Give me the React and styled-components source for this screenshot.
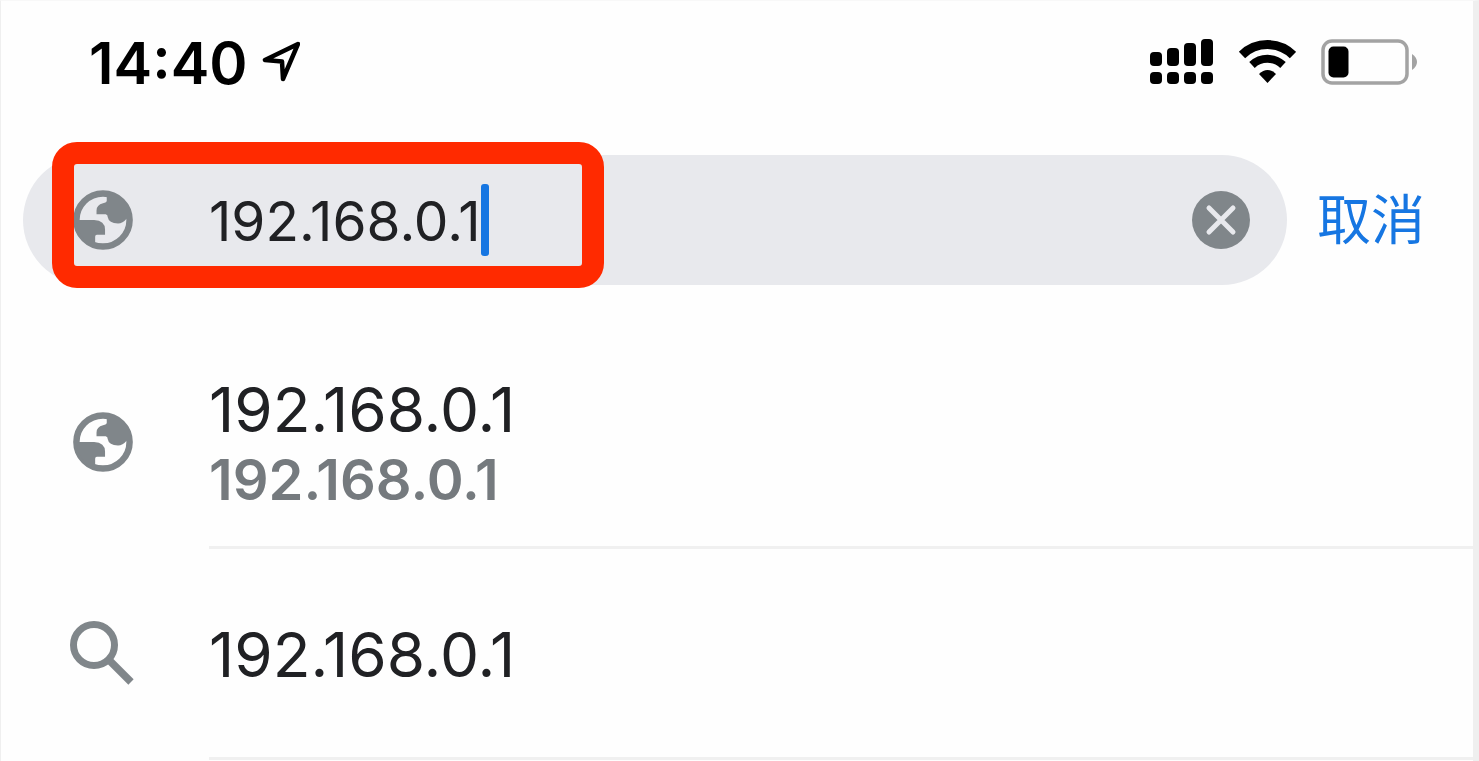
import React, { useState } from 'react'
import styled, { createGlobalStyle } from 'styled-components'

const suggestions = [
  { id: 1, type: 'page', title: '192.168.0.1', address: '192.168.0.1' },
  { id: 2, type: 'search', title: '192.168.0.1' },
]

const LocationIcon = () => (
  <svg width="38" height="44" viewBox="0 0 38 44" fill="none" aria-hidden="true">
    <path d="M36 3 L3 19 L20 20.500 L21 38 Z" stroke="#000" strokeWidth="4.500" strokeLinejoin="round" />
  </svg>
)

const SignalIcon = () => (
  <svg width="64" height="48" viewBox="0 0 64 48" aria-hidden="true">
    <rect x="1" y="13" width="12" height="14" rx="4" />
    <rect x="18" y="9" width="12" height="18" rx="4" />
    <rect x="35" y="4" width="12" height="23" rx="4" />
    <rect x="52" y="0" width="12" height="27" rx="4" />
    <rect x="1" y="33" width="12" height="12" rx="4" />
    <rect x="18" y="33" width="12" height="12" rx="4" />
    <rect x="35" y="33" width="12" height="12" rx="4" />
    <rect x="52" y="33" width="12" height="12" rx="4" />
  </svg>
)

const WifiIcon = () => (
  <svg width="58" height="48" viewBox="0 0 58 48" fill="none" aria-hidden="true">
    <path d="M4 16 A36.500 36.500 0 0 1 55 16" stroke="#000" strokeWidth="9" />
    <path d="M14 26 A22.500 22.500 0 0 1 45 26" stroke="#000" strokeWidth="8" />
    <path d="M21 35 Q29.500 27 38 35 L29.500 44 Z" fill="#000" />
  </svg>
)

const BatteryIcon = () => (
  <svg width="96" height="48" viewBox="0 0 96 48" fill="none" aria-hidden="true">
    <rect x="2" y="2" width="84" height="42" rx="9" stroke="#a3a3a3" strokeWidth="3.500" />
    <rect x="7.500" y="7.500" width="20" height="31" rx="5" fill="#000" />
    <path d="M91 15 Q96 18.500 96 23 Q96 27.500 91 31 Z" fill="#a3a3a3" />
  </svg>
)

const GlobeIcon = () => (
  <svg width="60" height="60" viewBox="0 0 176 176" fill="#80868a" aria-hidden="true">
    <circle cx="88" cy="88" r="78" fill="none" stroke="#80868a" strokeWidth="19" />
    <path d="M99 10 V33 Q97 38 88 39 Q69 44 69 60 V71 H96 Q102 72 102 80 Q105 98 132 98 Q146 98 157 84 L170 88 Q168 20 99 10 Z" />
    <path d="M10 88 H62 Q94 90 94 116 V131 H70 Q65 131 65 137 V166 Q18 150 10 88 Z" />
  </svg>
)

const SearchIcon = () => (
  <svg width="66" height="66" viewBox="0 0 66 66" fill="none" stroke="#80868a" aria-hidden="true">
    <circle cx="24" cy="25" r="20.500" strokeWidth="7" />
    <path d="M38 39 L61 62" strokeWidth="7.500" />
  </svg>
)

const ClearIcon = () => (
  <svg width="60" height="60" viewBox="0 0 60 60" fill="none" aria-hidden="true">
    <circle cx="30" cy="30" r="29" fill="#80868a" />
    <path d="M18 18 L42 42 M42 18 L18 42" stroke="#e8e9ed" strokeWidth="5" strokeLinecap="round" />
  </svg>
)

const App = () => {
  const [query, setQuery] = useState('192.168.0.1')

  return (
    <>
      <GlobalStyle />
      <Screen>
        <StatusBar>
          <Clock>
            <time>14:40</time>
            <LocationIcon />
          </Clock>
          <Indicators>
            <SignalIcon />
            <WifiIcon />
            <BatteryIcon />
          </Indicators>
        </StatusBar>

        <Toolbar onSubmit={(e) => e.preventDefault()}>
          <Omnibox>
            <IconSlot>
              <GlobeIcon />
            </IconSlot>
            <AddressInput
              aria-label="地址"
              autoComplete="off"
              value={query}
              onChange={(e) => setQuery(e.target.value)}
            />
            <Caret />
            <ClearButton type="button" aria-label="清除" onClick={() => setQuery('')}>
              <ClearIcon />
            </ClearButton>
            <Highlight />
          </Omnibox>
          <CancelButton type="button">取消</CancelButton>
        </Toolbar>

        <Suggestions>
          {suggestions.map(({ id, type, title, address }) => (
            <Suggestion key={id}>
              <IconSlot>{type === 'page' ? <GlobeIcon /> : <SearchIcon />}</IconSlot>
              <Details>
                <Title>{title}</Title>
                {address && <Address>{address}</Address>}
              </Details>
            </Suggestion>
          ))}
        </Suggestions>
      </Screen>
    </>
  )
}

const GlobalStyle = createGlobalStyle`
  * {
    box-sizing: border-box;
    margin: 0;
    padding: 0;
  }

  body {
    background: #fefefe;
    font-family: Inter, "Noto Sans CJK SC", sans-serif;
    overflow-x: hidden;
  }

  button, input {
    font-family: inherit;
    border: none;
    outline: none;
    background: none;
  }

  svg {
    display: block;
    flex-shrink: 0;
  }
`

const Screen = styled.main`
  min-height: 100vh;
  border-top: 1px solid #f8f8f8;
  border-left: 1px solid #efefef;
  border-right: 6px solid #efefef;
`

const StatusBar = styled.header`
  display: flex;
  align-items: center;
  justify-content: space-between;
  height: 124px;
  padding: 0 56px 0 88px;
`

const Clock = styled.div`
  display: flex;
  align-items: center;
  gap: 14px;
  font-size: 58px;
  font-weight: 600;
  line-height: 60px;
  color: #000;
`

const Indicators = styled.div`
  display: flex;
  align-items: center;
  gap: 25px;
`

const Toolbar = styled.form`
  display: flex;
  align-items: center;
  gap: 30px;
  padding: 30px 48px 0 22px;
`

const Omnibox = styled.div`
  position: relative;
  flex: 1;
  display: flex;
  align-items: center;
  height: 130px;
  padding: 0 36px 0 50px;
  border-radius: 65px;
  background: #e8e9ed;
`

const IconSlot = styled.span`
  display: flex;
  flex-shrink: 0;
  justify-content: center;
  width: 60px;
  margin-right: 76px;
`

const AddressInput = styled.input`
  field-sizing: content;
  padding-top: 2px;
  font-size: 55px;
  line-height: 72px;
  color: #202124;
`

const Caret = styled.span`
  width: 8px;
  height: 72px;
  border-radius: 3px;
  background: #1676e2;
`

const ClearButton = styled.button`
  margin-left: auto;
  cursor: pointer;
`

/* red marker drawn over the address */
const Highlight = styled.span`
  position: absolute;
  top: -13px;
  left: 29px;
  width: 552px;
  height: 146px;
  border: 22px solid #ff2a00;
  border-radius: 25px;
  pointer-events: none;
`

const CancelButton = styled.button`
  padding-top: 2px;
  font-size: 54px;
  line-height: 72px;
  color: #1676e2;
  white-space: nowrap;
  cursor: pointer;
`

const Suggestions = styled.ul`
  padding-top: 53px;
  list-style: none;

  ${IconSlot} {
    padding-bottom: 4px;
  }
`

const Suggestion = styled.li`
  display: flex;
  align-items: center;
  padding-left: 72px;
`

const Details = styled.div`
  flex: 1;
  display: flex;
  flex-direction: column;
  justify-content: center;
  height: 211px;
  padding-top: 4px;
  border-bottom: 3px solid #f0f0f0;
`

const Title = styled.p`
  font-size: 62px;
  line-height: 72px;
  color: #202124;
`

const Address = styled.p`
  font-size: 56px;
  font-weight: 600;
  line-height: 68px;
  color: #757a7e;
`

export default App
